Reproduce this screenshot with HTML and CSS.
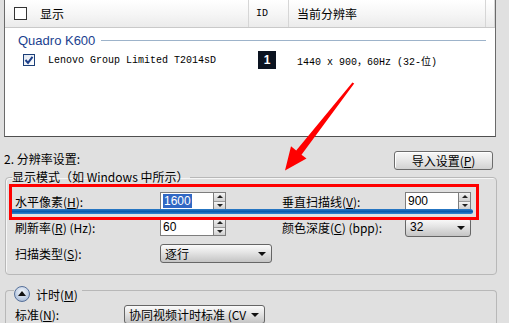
FILE: index.html
```html
<!DOCTYPE html>
<html>
<head>
    <title>显示设置</title>
    <link rel="stylesheet" href="styles.css">
</head>
<body>
    <div class="screen">
        <!-- Monitor list -->
        <div class="list">
            <div class="list-head">
                <div class="col col-show"><span class="box"></span><span>显示</span></div>
                <div class="col col-id">ID</div>
                <div class="col col-res">当前分辨率</div>
                <div class="col col-end"></div>
            </div>
            <div class="group-title">
                <span>Quadro K600</span>
                <span class="rule"></span>
            </div>
            <div class="list-row">
                <div class="col-show">
                    <span class="box checked">
                        <svg width="10" height="10" viewBox="0 0 10 10"><path d="M1.5 5 L4 7.8 L8.5 1.8" fill="none" stroke="#1d3f8a" stroke-width="2"/></svg>
                    </span>
                    <span class="mono">Lenovo Group Limited T2014sD</span>
                </div>
                <div class="col-id"><span class="id-badge">1</span></div>
                <div class="col-res mono">1440 x 900，60Hz (32-位)</div>
            </div>
        </div>

        <!-- Resolution settings -->
        <div class="settings-head">
            <span class="settings-title">2. 分辨率设置:</span>
            <button class="btn">导入设置(<u>P</u>)</button>
        </div>

        <fieldset class="mode">
            <legend>显示模式（如 Windows 中所示）</legend>
            <div class="mode-row first">
                <div class="lbl">水平像素(<u>H</u>):</div>
                <div class="cell">
                    <div class="spin">
                        <div class="spin-input"><span class="selected">1600</span></div>
                        <div class="spin-btns"><span class="up"></span><span class="down"></span></div>
                    </div>
                </div>
                <div class="lbl lbl2">垂直扫描线(<u>V</u>):</div>
                <div class="cell cell-last">
                    <div class="spin">
                        <div class="spin-input">900</div>
                        <div class="spin-btns"><span class="up"></span><span class="down"></span></div>
                    </div>
                </div>
            </div>
            <div class="mode-row">
                <div class="lbl">刷新率(<u>R</u>) (Hz):</div>
                <div class="cell">
                    <div class="spin">
                        <div class="spin-input">60</div>
                        <div class="spin-btns"><span class="up"></span><span class="down"></span></div>
                    </div>
                </div>
                <div class="lbl lbl2">颜色深度(<u>C</u>) (bpp):</div>
                <div class="cell cell-last">
                    <div class="select select-small">32<span class="arrow"></span></div>
                </div>
            </div>
            <div class="mode-row tall">
                <div class="lbl">扫描类型(<u>S</u>):</div>
                <div class="cell">
                    <div class="select select-mid">逐行<span class="arrow"></span></div>
                </div>
            </div>
        </fieldset>

        <!-- Timing -->
        <div class="timing">
            <div class="timing-head">
                <span class="collapse"></span>
                <span>计时(<u>M</u>)</span>
            </div>
            <div class="timing-row">
                <div class="lbl-std">标准(<u>N</u>):</div>
                <div class="select select-wide">协同视频计时标准 (CV<span class="arrow"></span></div>
            </div>
        </div>

        <!-- Annotations drawn over the screenshot -->
        <div class="annot-box"></div>
        <div class="annot-line"></div>
        <svg class="annot-arrow" width="509" height="323" viewBox="0 0 509 323">
            <polygon points="352.4,82.4 354.2,83.6 301.5,154.8 306.5,158.6 285,170.5 291,146.2 296.2,150.6" fill="#ff0000"/>
        </svg>
    </div>
</body>
</html>
```

FILE: styles.css
```css
body {
    margin: 0;
    padding: 0;
    background-color: #e0e0e0;
    font-family: "Noto Sans CJK SC", "Liberation Sans", sans-serif;
    font-size: 12px;
    color: #000;
}

u {
    text-decoration: underline;
}

.screen {
    position: relative;
    width: 509px;
    height: 323px;
    overflow: hidden;
}

.mono {
    font-family: "Liberation Mono", "Noto Sans CJK SC", monospace;
    font-size: 10px;
}

/* Monitor list */
.list {
    margin-left: 4px;
    width: 492px;
    height: 137px;
    box-sizing: border-box;
    background-color: #fff;
    border-left: 1px solid #6a6a6a;
    border-right: 1px solid #6a6a6a;
    border-bottom: 1px solid #4f4f4f;
}

.list-head {
    display: flex;
    height: 28px;
    box-sizing: border-box;
    background: linear-gradient(#ffffff, #f6f6f6 50%, #ebebeb);
    border-bottom: 1px solid #c9c9c9;
}

.list-head .col {
    display: flex;
    align-items: center;
    height: 27px;
    box-sizing: border-box;
    border-right: 1px solid #d6d6d6;
}

.col-show {
    display: flex;
    align-items: center;
    width: 244px;
    padding-left: 9px;
    gap: 13px;
    box-sizing: border-box;
}

.col-id {
    width: 40px;
    padding-left: 7px;
    box-sizing: border-box;
    font-family: "Liberation Mono", monospace;
    font-size: 10px;
}

.col-res {
    width: 197px;
    padding-left: 8px;
    box-sizing: border-box;
}

.col-end {
    flex: 1;
    border-right: none;
}

.box {
    display: inline-block;
    width: 13px;
    height: 13px;
    box-sizing: border-box;
    border: 1px solid #333;
    background-color: #fff;
}

.group-title {
    display: flex;
    align-items: center;
    padding-left: 13px;
    padding-top: 4px;
    height: 16px;
    font-family: "Liberation Sans", sans-serif;
    font-size: 13px;
    color: #1b3f8f;
}

.group-title .rule {
    flex: 1;
    height: 1px;
    margin-left: 6px;
    margin-right: 9px;
    background-color: #9db3ca;
}

.list-row {
    display: flex;
    align-items: center;
    height: 18px;
    margin-top: 3px;
}

.list-row .col-show {
    padding-left: 18px;
}

.list-row .col-id {
    padding-left: 9px;
}

.box.checked {
    width: 12px;
    height: 12px;
    border-color: #1c3f78;
    background: linear-gradient(135deg, #dfe6f0, #ffffff);
    display: flex;
    align-items: center;
    justify-content: center;
}

.id-badge {
    display: flex;
    align-items: center;
    justify-content: center;
    width: 18px;
    height: 18px;
    background-color: #0b1320;
    color: #fff;
    font-family: "Liberation Sans", sans-serif;
    font-weight: bold;
    font-size: 12px;
}

/* Settings */
.settings-head {
    display: flex;
    justify-content: space-between;
    align-items: center;
    height: 20px;
    margin-top: 13px;
    padding: 0 16px 0 4px;
}

.settings-title {
    margin-top: -4px;
}

.btn {
    width: 99px;
    height: 19px;
    padding: 0;
    font-family: inherit;
    font-size: 12px;
    border: 1px solid #6c6c6c;
    border-radius: 3px;
    background: linear-gradient(#f8f8f8, #e6e6e6 50%, #d2d2d2);
    box-shadow: inset 1px 1px 0 #fff;
}

.mode {
    margin: 0 12px 0 5px;
    padding: 0 0 11px 6px;
    border: 1px solid #b8b8b8;
    border-radius: 4px;
    box-shadow: inset 1px 1px 0 #f6f6f6;
    min-inline-size: 0;
}

.mode legend {
    padding: 0 2px 0 0;
    line-height: 14px;
}

.mode-row {
    display: flex;
    align-items: center;
    height: 18px;
    margin-top: 8px;
    padding-left: 3px;
}

.mode-row.first {
    margin-top: 8px;
}

.mode-row.tall {
    height: 19px;
}

.lbl {
    flex-shrink: 0;
    width: 145px;
}

.lbl2 {
    width: 123px;
}

.cell {
    flex-shrink: 0;
    width: 122px;
}

.cell-last {
    width: auto;
}

.spin {
    display: flex;
    height: 18px;
}

.spin-input {
    width: 53px;
    height: 18px;
    box-sizing: border-box;
    border: 1px solid #7d7d7d;
    border-right: none;
    background-color: #fff;
    padding-left: 2px;
    font-family: "Liberation Sans", sans-serif;
    font-size: 12px;
    line-height: 16px;
}

.selected {
    background-color: #3168c4;
    color: #fff;
    padding: 0 1px;
}

.spin-btns {
    display: flex;
    flex-direction: column;
    width: 13px;
    height: 18px;
    box-sizing: border-box;
    border: 1px solid #7d7d7d;
}

.spin-btns span {
    flex: 1;
    position: relative;
    background: linear-gradient(#f4f4f4, #cfcfcf);
    border-bottom: 1px solid #9a9a9a;
}

.spin-btns span:last-child {
    border-bottom: none;
}

.spin-btns span::after {
    content: "";
    position: absolute;
    left: 3px;
    top: 2px;
    border-left: 3px solid transparent;
    border-right: 3px solid transparent;
}

.spin-btns .up::after {
    border-bottom: 3px solid #222;
}

.spin-btns .down::after {
    border-top: 3px solid #222;
}

.select {
    position: relative;
    height: 19px;
    box-sizing: border-box;
    border: 1px solid #666;
    border-radius: 3px;
    padding-left: 4px;
    line-height: 17px;
    background: linear-gradient(#fbfbfb, #e4e4e4 45%, #c4c4c4);
    font-family: "Noto Sans CJK SC", "Liberation Sans", sans-serif;
}

.select-small {
    width: 66px;
    font-family: "Liberation Sans", sans-serif;
}

.select-mid {
    width: 112px;
}

.select-wide {
    width: 141px;
}

.arrow {
    position: absolute;
    right: 5px;
    top: 7px;
    border-left: 4px solid transparent;
    border-right: 4px solid transparent;
    border-top: 4px solid #111;
}

/* Timing */
.timing {
    margin: 15px 12px 0 5px;
    height: 60px;
    border-top: 1px solid #b8b8b8;
    border-left: 1px solid #b8b8b8;
    border-right: 1px solid #b8b8b8;
    border-radius: 4px 4px 0 0;
}

.timing-head {
    display: flex;
    align-items: center;
    gap: 6px;
    width: fit-content;
    height: 16px;
    margin-top: -5px;
    margin-left: 8px;
    padding-right: 4px;
    background-color: #e0e0e0;
}

.collapse {
    position: relative;
    width: 16px;
    height: 16px;
    box-sizing: border-box;
    border: 1px solid #56709a;
    border-radius: 50%;
    background: radial-gradient(circle at 50% 35%, #f4f7fb, #b6c6de 70%, #8ea4c6);
}

.collapse::after {
    content: "";
    position: absolute;
    left: 3px;
    top: 4px;
    border-left: 4px solid transparent;
    border-right: 4px solid transparent;
    border-bottom: 5px solid #111;
}

.timing-row {
    display: flex;
    align-items: center;
    margin-top: 3px;
    padding-left: 9px;
}

.lbl-std {
    width: 109px;
}

/* Annotations */
.annot-box {
    position: absolute;
    left: 9px;
    top: 184px;
    width: 470px;
    height: 36px;
    box-sizing: border-box;
    border: 3px solid #ff0000;
}

.annot-line {
    position: absolute;
    left: 12px;
    top: 209px;
    width: 461px;
    height: 5px;
    border-radius: 0 3px 3px 0;
    background: linear-gradient(#2c7cc8, #0a5aaa 50%, #2f86cf);
}

.annot-arrow {
    position: absolute;
    left: 0;
    top: 0;
}
```
